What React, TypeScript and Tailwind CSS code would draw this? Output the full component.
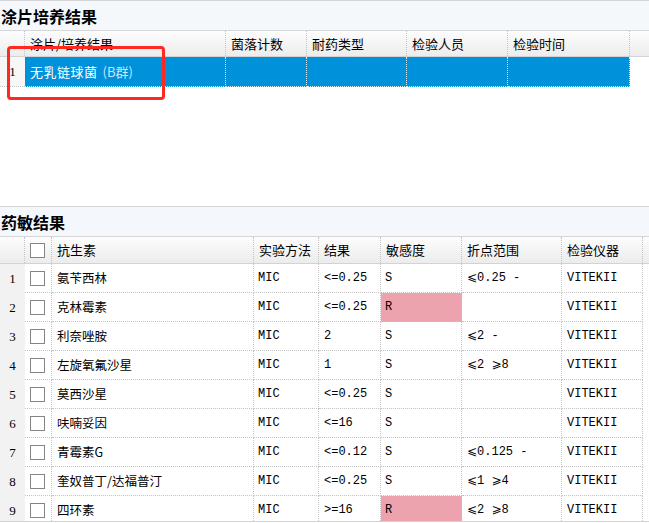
import React from "react";

const cjk = "font-['Noto_Sans_CJK_SC',sans-serif]";
const mono = "font-['Liberation_Mono','DejaVu_Sans','Noto_Sans_CJK_SC',monospace]";

const smearHeaders = ["涂片/培养结果", "菌落计数", "耐药类型", "检验人员", "检验时间"];

const drugHeaders = ["抗生素", "实验方法", "结果", "敏感度", "折点范围", "检验仪器"];

const drugs = [
  { name: "氨苄西林", method: "MIC", result: "<=0.25", sens: "S", range: "⩽0.25 -" },
  { name: "克林霉素", method: "MIC", result: "<=0.25", sens: "R", range: "" },
  { name: "利奈唑胺", method: "MIC", result: "2", sens: "S", range: "⩽2 -" },
  { name: "左旋氧氟沙星", method: "MIC", result: "1", sens: "S", range: "⩽2 ⩾8" },
  { name: "莫西沙星", method: "MIC", result: "<=0.25", sens: "S", range: "" },
  { name: "呋喃妥因", method: "MIC", result: "<=16", sens: "S", range: "" },
  { name: "青霉素G", method: "MIC", result: "<=0.12", sens: "S", range: "⩽0.125 -" },
  { name: "奎奴普丁/达福普汀", method: "MIC", result: "<=0.25", sens: "S", range: "⩽1 ⩾4" },
  { name: "四环素", method: "MIC", result: ">=16", sens: "R", range: "⩽2 ⩾8" },
];

function Checkbox() {
  return <span className="block w-[15px] h-[15px] border border-[#858585] bg-white" />;
}

function TitleBar({ text }: { text: string }) {
  return (
    <div className="h-[31px] border-y border-[#d6d6d6] bg-[#f4f7fc] flex items-center pl-[1px]">
      <span className={`${cjk} text-[16px] font-bold text-black leading-none`}>{text}</span>
    </div>
  );
}

const cellLine = "border-r border-dotted border-[#c4c4c4]";
const headBg = "bg-gradient-to-b from-[#fdfdfd] to-[#ececec]";

export default function App() {
  return (
    <div className="relative w-[649px] h-[523px] overflow-hidden bg-white flex flex-col">
      {/* smear / culture result */}
      <TitleBar text="涂片培养结果" />
      <div
        className={`grid grid-cols-[25px_201px_81px_100px_101px_122px_1fr] h-[26px] border-b border-[#d3d3d3] ${headBg} ${cjk} text-[13px] text-black`}
      >
        <div className={cellLine} />
        {smearHeaders.map((h) => (
          <div key={h} className={`${cellLine} flex items-center pl-[5px]`}>
            {h}
          </div>
        ))}
        <div />
      </div>
      <div className="grid grid-cols-[25px_201px_81px_100px_101px_122px_1fr] h-[30px]">
        <div className="bg-[#f7f7f7] border-b border-dotted border-[#c4c4c4] flex items-center justify-center font-['Liberation_Serif',serif] text-[13px] text-black">
          1
        </div>
        <div className="bg-[#0091db] border-r border-b border-dotted border-[#d9eefa] flex items-center pl-[5px] gap-[5px]">
          <span className={`${cjk} text-[13px] tracking-[0.5px] text-white`}>无乳链球菌</span>
          <span className={`${cjk} text-[13px] text-[#c4e6ff]`}>(B群)</span>
        </div>
        <div className="bg-[#0091db] border-r border-b border-dotted border-[#d9eefa]" />
        <div className="bg-[#0091db] border-r border-b border-dotted border-[#d9eefa]" />
        <div className="bg-[#0091db] border-r border-b border-dotted border-[#d9eefa]" />
        <div className="bg-[#0091db] border-r border-b border-dotted border-[#d9eefa]" />
        <div />
      </div>
      <div className="h-[119px]" />

      {/* susceptibility result */}
      <TitleBar text="药敏结果" />
      <div
        className={`grid grid-cols-[25px_27px_202px_65px_62px_81px_100px_81px_1fr] h-[27px] border-b border-[#d3d3d3] ${headBg} ${cjk} text-[13px] text-black`}
      >
        <div className={cellLine} />
        <div className={`${cellLine} flex items-center justify-center pr-[1px]`}>
          <Checkbox />
        </div>
        {drugHeaders.map((h) => (
          <div key={h} className={`${cellLine} flex items-center pl-[5px]`}>
            {h}
          </div>
        ))}
        <div />
      </div>
      <div className="h-[258px] overflow-hidden border-b border-[#d3d3d3]">
        {drugs.map((d, i) => (
          <div
            key={d.name}
            className="grid grid-cols-[25px_27px_202px_65px_62px_81px_100px_81px_1fr] h-[29px] shrink-0"
          >
            <div className="bg-[#f2f2f2] flex items-center justify-center font-['Liberation_Serif',serif] text-[13px] text-black">
              {i + 1}
            </div>
            <div className={`${cellLine} border-b flex items-center justify-center pr-[1px]`}>
              <Checkbox />
            </div>
            <div className={`${cellLine} border-b flex items-center pl-[5px] ${cjk} text-[12.5px] text-black`}>
              {d.name}
            </div>
            <div className={`${cellLine} border-b flex items-center pl-[4px] ${mono} text-[12px] text-black`}>
              {d.method}
            </div>
            <div className={`${cellLine} border-b flex items-center pl-[5px] ${mono} text-[12px] text-black`}>
              {d.result}
            </div>
            <div
              className={`${cellLine} border-b flex items-center pl-[4px] ${mono} text-[12px] text-black ${
                d.sens === "R" ? "bg-[#eca3ae]" : ""
              }`}
            >
              {d.sens}
            </div>
            <div className={`${cellLine} border-b flex items-center pl-[5px] ${mono} text-[12px] text-black`}>
              {d.range}
            </div>
            <div className={`${cellLine} border-b flex items-center pl-[5px] ${mono} text-[12px] text-black`}>
              VITEKII
            </div>
            <div />
          </div>
        ))}
      </div>

      {/* red highlight annotation */}
      <div className="absolute left-[7px] top-[46px] w-[158px] h-[54px] border-[3px] border-[#fe2a22] rounded-[4px] pointer-events-none" />
    </div>
  );
}
